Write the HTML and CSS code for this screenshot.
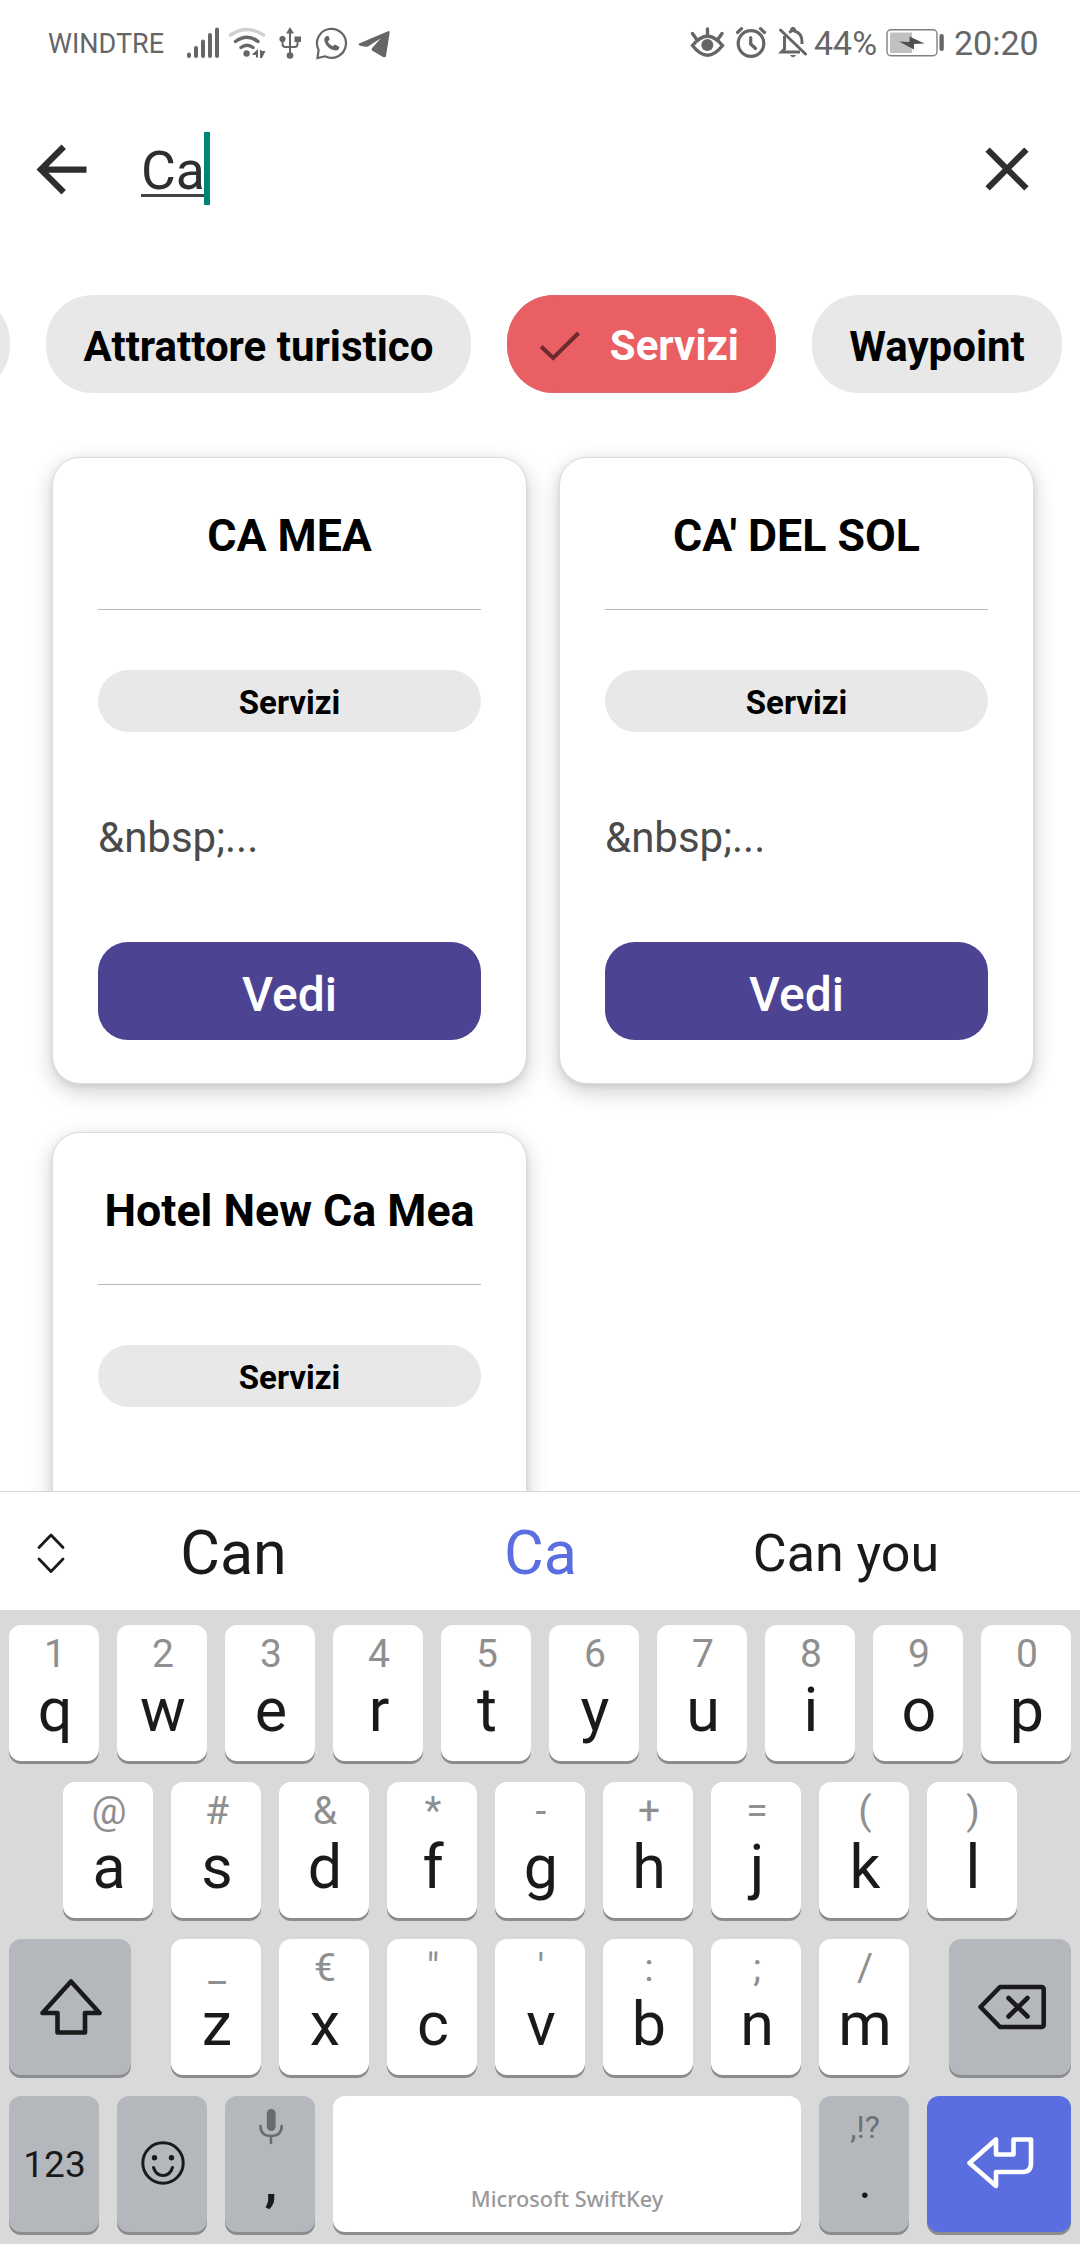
FILE: index.html
```html
<!DOCTYPE html>
<html lang="it">
<head>
<meta charset="utf-8">
<title>Cerca</title>
<link rel="stylesheet" href="styles.css">
</head>
<body>
<header class="status">
  <span class="carrier">WINDTRE</span>
  <svg class="ic signal" width="34" height="36" viewBox="186 25 34 36" stroke="#666" stroke-width="4" stroke-linecap="round"><path d="M189 54.5V56M196 48V56M203 41.500V56M210 35V56M217 29.500V56"/></svg>
  <svg class="ic wifi" width="38" height="36" viewBox="228 25 38 36" fill="none" stroke="#666" stroke-width="3.400" stroke-linecap="round"><path stroke="#d0d0d0" d="M230.500 35Q247 24 263.500 35"/><path d="M235.500 41.500Q247 33 258 41.500M241 47.500Q247 43 253 47.500"/><circle cx="246.600" cy="53.500" r="3.200" fill="#666" stroke="none"/><path fill="#666" stroke="none" d="M252.500 54L258 49V57.500H256V55H252.500zM260 49.500L262 51H265.500L262 58H260z"/></svg>
  <svg class="ic usb" width="24" height="36" viewBox="278 25 24 36" fill="#666"><path d="M290 27L294 33.500H286zM294.500 36.500H301V42H294.500z"/><circle cx="282.500" cy="39" r="3.100"/><circle cx="290" cy="55.500" r="3.300"/><path fill="none" stroke="#666" stroke-width="2" d="M290 32V54M282.500 40V44Q282.500 47 285.500 47H294.500Q297.500 47 297.500 44V40"/></svg>
  <svg class="ic whatsapp" width="33" height="36" viewBox="315 25 33 36" fill="none" stroke="#666" stroke-width="2.200"><path d="M317.500 58L318.600 50A14.500 14.500 0 1 1 325 56.300Z"/><path fill="#666" stroke="none" d="M326.500 36Q323.500 37.500 324.500 41.500Q327 49 335.500 50.500Q339 50.500 339.500 47L335 44.500L332.500 46.300Q329 44.500 327.800 41.500L329.800 39.500L328.500 36z"/></svg>
  <svg class="ic telegram" width="34" height="36" viewBox="357 25 34 36" fill="#666"><path d="M359 43.500L388 31.200Q390 30.500 389.600 33L386 56Q385.400 58 383 57L372 50.500Q371 49.500 372 48.300L380.500 38.500L368 46.500Q366 47.300 359.500 45.500Q358 44.600 359 43.500z"/></svg>
  <svg class="ic eye" width="36" height="36" viewBox="689 25 36 36" fill="none" stroke="#666" stroke-width="3.400" stroke-linecap="round"><path d="M692.500 45.500Q707.500 27 722.500 45.500Q707.500 65 692.500 45.500zM707.500 29V35M692.500 33.500L696 38.500M722 33.500L718.500 38.500"/><circle cx="707.300" cy="45" r="6" fill="#666" stroke="none"/></svg>
  <svg class="ic alarm" width="34" height="36" viewBox="734 25 34 36" fill="none" stroke="#666" stroke-width="3.200"><circle cx="751" cy="43.500" r="12.800"/><path stroke-linecap="round" d="M750.700 37.500V44L755.500 48.500M737.500 32.500L741.500 28.700M764.500 32.500L760.500 28.700"/></svg>
  <svg class="ic bell" width="30" height="36" viewBox="778 25 30 36" fill="none" stroke="#666" stroke-width="3"><path stroke-linecap="round" d="M780.500 30L805.500 54"/><path d="M784.500 36V49L781.500 52H800M789 32.500Q791 31.500 791.500 31V29.500Q793 27 794.500 29.500V31Q802 33 802 42V44"/><path fill="#666" stroke="none" d="M790 55H796Q793 59.500 790 55z"/></svg>
  <span class="pct">44%</span>
  <svg class="ic battery" width="60" height="36" viewBox="885 25 60 36"><rect x="887" y="29.700" width="50" height="26" rx="4" fill="none" stroke="#808080" stroke-width="1.400"/><path fill="#c1c1c1" d="M890 34Q890 32.500 891.500 32.500H912V53H891.500Q890 53 890 51.500z"/><rect x="939.500" y="34" width="4.300" height="17" rx="2" fill="#666"/><path fill="#505050" d="M899 41.500L909.500 42V36.500L924.500 43.500L914 44V49.500z"/></svg>
  <span class="clock">20:20</span>
</header>

<div class="search">
  <svg width="75" height="75" viewBox="0 0 24 24" fill="#2e2e2e"><path d="M20 11H7.830l5.590-5.590L12 4l-8 8 8 8 1.410-1.410L7.830 13H20v-2z"/></svg>
  <div class="query"><span class="typed">Ca</span><i class="caret"></i></div>
  <svg class="clear" width="74" height="74" viewBox="0 0 24 24" fill="#2e2e2e"><path d="M19 6.410L17.590 5 12 10.590 6.410 5 5 6.410 10.590 12 5 17.590 6.410 19 12 13.410 17.590 19 19 17.590 13.410 12z"/></svg>
</div>

<nav class="chips">
  <span class="chip cut"></span>
  <span class="chip c1">Attrattore turistico</span>
  <span class="chip on"><svg width="42" height="32" viewBox="0 0 42 32" fill="none" stroke="#6b2a2d" stroke-width="4"><path d="M2.200 16.500L14.200 28L39.500 3"/></svg><span>Servizi</span></span>
  <span class="chip c3">Waypoint</span>
</nav>

<main class="results">
  <article class="card"><h2>CA MEA</h2><hr><span class="tag">Servizi</span><p>&amp;nbsp;...</p><a class="btn">Vedi</a></article>
  <article class="card"><h2>CA' DEL SOL</h2><hr><span class="tag">Servizi</span><p>&amp;nbsp;...</p><a class="btn">Vedi</a></article>
  <article class="card"><h2>Hotel New Ca Mea</h2><hr><span class="tag">Servizi</span></article>
</main>

<section class="suggest">
  <svg width="30" height="42" viewBox="0 0 30 42" fill="none" stroke="#1a1a1a" stroke-width="2.800" stroke-linecap="round" stroke-linejoin="round"><path d="M3 15.500L15 3L27 15.500M3 27L15 39.500L27 27"/></svg>
  <span class="s1">Can</span><span class="s2">Ca</span><span class="s3">Can you</span>
</section>

<section class="keyboard">
  <div class="row">
    <div class="key"><small>1</small><b>q</b></div><div class="key"><small>2</small><b>w</b></div><div class="key"><small>3</small><b>e</b></div><div class="key"><small>4</small><b>r</b></div><div class="key"><small>5</small><b>t</b></div><div class="key"><small>6</small><b>y</b></div><div class="key"><small>7</small><b>u</b></div><div class="key"><small>8</small><b>i</b></div><div class="key"><small>9</small><b>o</b></div><div class="key"><small>0</small><b>p</b></div>
  </div>
  <div class="row">
    <div class="key"><small>@</small><b>a</b></div><div class="key"><small>#</small><b>s</b></div><div class="key"><small>&amp;</small><b>d</b></div><div class="key"><small>*</small><b>f</b></div><div class="key"><small>-</small><b>g</b></div><div class="key"><small>+</small><b>h</b></div><div class="key"><small>=</small><b>j</b></div><div class="key"><small>(</small><b>k</b></div><div class="key"><small>)</small><b>l</b></div>
  </div>
  <div class="row spread">
    <div class="key fn wide"><svg width="64" height="60" viewBox="39 1976 64 60" fill="none" stroke="#1a1a1a" stroke-width="4.600" stroke-linejoin="round"><path d="M71 1980.500L99.500 2012H85V2031.500H57.500V2012H42.500z"/></svg></div>
    <div class="group"><div class="key"><small>_</small><b>z</b></div><div class="key"><small>€</small><b>x</b></div><div class="key"><small>"</small><b>c</b></div><div class="key"><small>'</small><b>v</b></div><div class="key"><small>:</small><b>b</b></div><div class="key"><small>;</small><b>n</b></div><div class="key"><small>/</small><b>m</b></div></div>
    <div class="key fn wide"><svg width="72" height="48" viewBox="974 1982 72 48" fill="none" stroke="#1a1a1a" stroke-width="4.600" stroke-linejoin="round" stroke-linecap="round"><path d="M999 1986H1040Q1042.700 1986 1042.700 1988.500V2023.500Q1042.700 2026 1040 2026H999L979.500 2006zM1007.500 1997L1026.500 2015.500M1026.500 1997L1007.500 2015.500"/></svg></div>
  </div>
  <div class="row">
    <div class="key fn num">123</div>
    <div class="key fn mid"><svg width="46" height="46" viewBox="0 0 46 46" fill="none" stroke="#1a1a1a" stroke-width="3" stroke-linecap="round"><circle cx="23" cy="23" r="20.200"/><path d="M13.500 27.500Q16 35.500 23 35.500T32.500 27.500"/><circle cx="14.500" cy="17.800" r="2.700" fill="#1a1a1a" stroke="none"/><circle cx="31.500" cy="17.800" r="2.700" fill="#1a1a1a" stroke="none"/></svg></div>
    <div class="key fn mic"><svg width="26" height="38" viewBox="0 0 26 38" fill="none" stroke="#6a6b6e" stroke-width="2.600" stroke-linecap="round"><rect x="8.800" y="1" width="8.800" height="22" rx="4.400" fill="#6a6b6e" stroke="none"/><path d="M2.500 18Q2.500 28 13 28T23.700 18M13 28V35"/></svg><b>,</b></div>
    <div class="key space">Microsoft SwiftKey</div>
    <div class="key fn dot"><small>,!?</small><b>.</b></div>
    <div class="key enter"><svg width="70" height="56" viewBox="965 2135 70 56" fill="none" stroke="#fff" stroke-width="4.600" stroke-linejoin="round"><path d="M996 2139.500V2154.500H1013.500V2139.500H1031V2163Q1031 2172 1023 2172H996V2186L969.500 2163z"/></svg></div>
  </div>
</section>
</body>
</html>
```

FILE: styles.css
```css
* { box-sizing: border-box; }
body {
  margin: 0;
  width: 1080px;
  height: 2244px;
  overflow: hidden;
  display: flex;
  flex-direction: column;
  background: #fff;
  font-family: Roboto, sans-serif;
  color: #000;
}
svg { display: block; flex: none; }

.status { height: 86px; display: flex; align-items: center; padding-left: 48px; color: #666; flex: none; white-space: nowrap; }
.carrier { width: 138px; font-size: 27px; line-height: 36px; padding-top: 1px; }
.wifi { margin-left: 8px; }
.usb { margin-left: 12px; }
.whatsapp { margin-left: 13px; }
.telegram { margin-left: 9px; }
.eye { margin-left: 298px; }
.alarm { margin-left: 9px; }
.bell { margin-left: 10px; }
.pct { width: 77px; padding-left: 6px; font-size: 34px; }
.clock { margin-left: 9px; font-size: 34px; }

.search { height: 209px; display: flex; align-items: flex-start; padding: 46px 36px 0 24px; flex: none; }
.query { display: flex; margin-left: 42px; flex: 1; }
.typed { font-size: 53.5px; line-height: 78px; color: #2e2e2e; height: 65px; border-bottom: 3px solid #444; width: 64px; }
.caret { width: 6px; height: 73px; background: #008577; margin-left: -1px; }

.chips { display: flex; gap: 36px; height: 98px; flex: none; overflow: hidden; }
.chip { height: 98px; border-radius: 47px; background: #e8e8e8; font-weight: 700; font-size: 42px; line-height: 104px; text-align: center; flex: none; white-space: nowrap; }
.cut { width: 110px; margin-left: -100px; }
.c1 { width: 425px; }
.on { width: 269px; background: #ea5f63; color: #fff; display: flex; align-items: center; justify-content: space-between; padding: 3px 37px 0 32px; box-shadow: inset 0 0 0 1px #dc686b; }
.c3 { width: 250px; }

.results { flex: 1; min-height: 0; overflow: hidden; display: grid; grid-template-columns: 475px 475px; gap: 48px 32px; align-content: start; padding: 64px 0 0 52px; }
.card { height: 627px; border-radius: 28px; border: 1px solid #dcdcdc; background: #fff; padding: 0 45px; display: flex; flex-direction: column; box-shadow: 0 7px 22px rgba(0,0,0,.2), 0 2px 6px rgba(0,0,0,.08); }
.card h2 { margin: 0 -20px; padding-top: 48px; font-size: 44.7px; line-height: 60px; height: 151px; font-weight: 700; text-align: center; white-space: nowrap; }
.card hr { margin: 0; border: 0; height: 1px; background: #b8b8b8; flex: none; }
.tag { margin-top: 60px; height: 62px; border-radius: 31px; background: #e8e8e8; font-size: 33px; font-weight: 700; line-height: 65px; text-align: center; flex: none; }
.card p { margin: 76px 0 0; height: 134px; font-size: 42px; line-height: 60px; color: #4a4a4a; flex: none; }
.btn { height: 98px; border-radius: 30px; background: #4c4392; color: #fff; font-size: 48px; font-weight: 500; line-height: 106px; text-align: center; flex: none; }

.suggest { height: 119px; border-top: 1px solid #d8d8d8; display: flex; align-items: center; background: #fff; color: #1a1a1a; padding: 4px 0 0 36px; flex: none; }
.suggest span { text-align: center; white-space: nowrap; }
.s1 { width: 335px; font-size: 61px; }
.s2 { width: 279px; font-size: 61px; color: #5a6ee0; }
.s3 { width: 332px; font-size: 52px; }

.keyboard { height: 634px; background: #d9d9d9; padding: 15px 9px 0; display: flex; flex-direction: column; gap: 21px; flex: none; }
.row { display: flex; justify-content: center; gap: 18px; }
.spread { justify-content: space-between; }
.group { display: flex; gap: 18px; }
.key { width: 90px; height: 136px; border-radius: 12px; background: #fff; box-shadow: 0 3px 0 #8b8c90; color: #1a1a1a; display: flex; flex-direction: column; align-items: center; flex: none; padding-left: 2px; }
.key small { font-size: 39px; line-height: 59px; height: 57px; color: #8f8f8f; }
.key b { font-size: 61px; line-height: 57px; font-weight: 400; }
.fn { background: #b4b8bd; }
.wide { width: 122px; justify-content: center; }
.mid { justify-content: center; padding-bottom: 2px; }
.num { justify-content: center; font-size: 37px; padding-left: 1px; }
.mic { padding-top: 12px; }
.mic b { margin-top: 8px; font-weight: 700; font-size: 52px; }
.space { width: 468px; padding-left: 0; justify-content: flex-end; padding-bottom: 17px; font: 500 21.700px/32px "Noto Sans", sans-serif; color: #999; }
.key.dot small { font-size: 32px; line-height: 62px; color: #6f7073; }
.key.dot b { font-size: 50px; line-height: 57px; }
.enter { width: 144px; background: #5a6ee0; justify-content: center; padding-bottom: 2px; }
```
